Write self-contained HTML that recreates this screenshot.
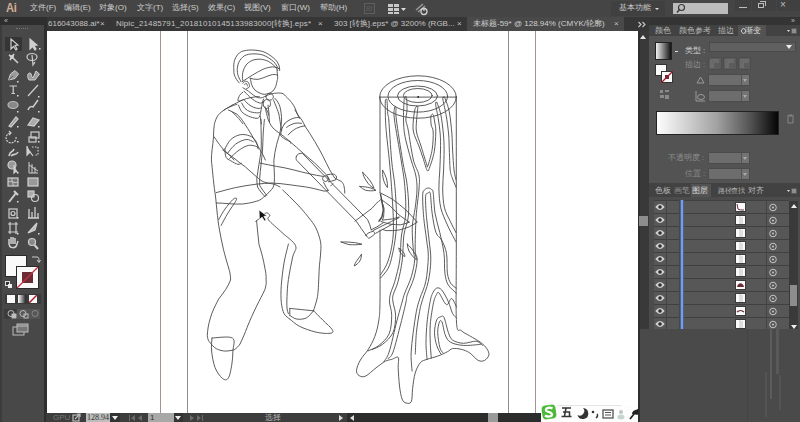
<!DOCTYPE html>
<html><head><meta charset="utf-8">
<style>
*{margin:0;padding:0;box-sizing:border-box}
html,body{width:800px;height:422px;overflow:hidden;background:#4a4a4a;font-family:"Liberation Sans",sans-serif}
.a{position:absolute}
.t{position:absolute;white-space:nowrap;color:#cfcfcf;font-size:8px;line-height:10px}
.p{font-size:7.5px}
</style></head><body>
<!-- menubar -->
<div class="a" style="left:0;top:0;width:800px;height:17px;background:#454545"></div>
<div class="t" style="left:6px;top:1px;font-size:13.5px;line-height:13px;color:#d4ae95;font-weight:bold;transform:scaleX(0.82);transform-origin:0 0;letter-spacing:-0.3px">Ai</div>
<div class="t" style="left:30px;top:3px">文件(F)</div>
<div class="t" style="left:64px;top:3px">编辑(E)</div>
<div class="t" style="left:99px;top:3px">对象(O)</div>
<div class="t" style="left:137px;top:3px">文字(T)</div>
<div class="t" style="left:172px;top:3px">选择(S)</div>
<div class="t" style="left:208px;top:3px">效果(C)</div>
<div class="t" style="left:244px;top:3px">视图(V)</div>
<div class="t" style="left:281px;top:3px">窗口(W)</div>
<div class="t" style="left:320px;top:3px">帮助(H)</div>
<div class="a" style="left:364px;top:3px;width:11px;height:11px;border:1px solid #5e5e5e"></div>
<div class="t" style="left:366px;top:4px;font-size:7px;color:#5e5e5e">Br</div>
<svg class="a" style="left:386px;top:2px" width="24" height="14">
 <rect x="2" y="2" width="5" height="3" fill="#c9c9c9"/><rect x="8" y="2" width="5" height="3" fill="#c9c9c9"/>
 <rect x="2" y="6" width="5" height="3" fill="#c9c9c9"/><rect x="8" y="6" width="5" height="3" fill="#c9c9c9"/>
 <rect x="2" y="10" width="5" height="2" fill="#c9c9c9"/><rect x="8" y="10" width="5" height="2" fill="#c9c9c9"/>
 <path d="M15 6 L20 6 L17.5 9Z" fill="#dcdcdc"/>
</svg>
<svg class="a" style="left:414px;top:2px" width="18" height="14">
 <path d="M2 8 L9 2 M4 10 L11 4" stroke="#9a9a9a" stroke-width="1.5"/>
 <circle cx="10" cy="9.5" r="3" fill="none" stroke="#d0d0d0" stroke-width="1.3"/>
 <path d="M10 5.5 V9" stroke="#d0d0d0" stroke-width="1.2"/>
</svg>
<div class="a" style="left:611px;top:1px;width:54px;height:15px;background:#404040"></div>
<div class="t" style="left:619px;top:3px">基本功能</div>
<div class="a" style="left:655px;top:8px;width:0;height:0;border-left:2px solid transparent;border-right:2px solid transparent;border-top:2px solid #ddd"></div>
<div class="a" style="left:673px;top:3px;width:55px;height:11px;background:#bcbcbc"></div>
<svg class="a" style="left:675px;top:3px" width="12" height="11"><circle cx="6.5" cy="4.5" r="3" fill="none" stroke="#3a3a3a" stroke-width="1.2"/><path d="M4.5 6.5 L2 9.5" stroke="#3a3a3a" stroke-width="1.4"/></svg>
<div class="a" style="left:735px;top:0;width:16px;height:11px;background:#404040"></div>
<div class="a" style="left:752px;top:0;width:24px;height:11px;background:#404040"></div>
<div class="a" style="left:777px;top:0;width:23px;height:11px;background:#404040"></div>
<div class="a" style="left:739px;top:7px;width:8px;height:1px;background:#bdbdbd"></div>
<div class="a" style="left:758px;top:3px;width:6px;height:5px;border:1px solid #bdbdbd"></div>
<div class="a" style="left:760px;top:1px;width:6px;height:5px;border-top:1px solid #bdbdbd;border-right:1px solid #bdbdbd"></div>
<div class="t" style="left:780px;top:0px;color:#bdbdbd;font-size:10px">×</div>

<!-- tab bar -->
<div class="a" style="left:46px;top:17px;width:602px;height:14px;background:#363636"></div>
<div class="a" style="left:467px;top:17px;width:157px;height:14px;background:#494949"></div>
<div class="t" style="left:48px;top:19px;color:#c4c4c4">616043088.ai*</div>
<div class="t" style="left:100px;top:19px;color:#c4c4c4">×</div>
<div class="t" style="left:116px;top:19px;color:#c4c4c4;letter-spacing:0.12px">Nipic_21485791_20181010145133983000[转换].eps*</div>
<div class="t" style="left:318px;top:19px;color:#c4c4c4">×</div>
<div class="t" style="left:334px;top:19px;color:#c4c4c4">303 [转换].eps* @ 3200% (RGB...</div>
<div class="t" style="left:457px;top:19px;color:#c4c4c4">×</div>
<div class="t" style="left:473px;top:19px;color:#d0d0d0">未标题-59* @ 128.94% (CMYK/轮廓)</div>
<div class="t" style="left:614px;top:19px;color:#c4c4c4">×</div>

<!-- left toolbar -->
<div class="a" style="left:0;top:17px;width:47px;height:405px;background:#2e2e2e"></div>
<div class="a" style="left:0;top:25px;width:44px;height:397px;background:#484848"></div>
<div class="a" style="left:0;top:25px;width:2px;height:397px;background:#3c3c3c"></div>
<div class="t" style="left:4px;top:17px;font-size:7px;line-height:8px;color:#bbb">«</div>
<div class="a" style="left:16px;top:28px;width:12px;height:2px;border-top:1px dotted #777"></div>
<div class="a" style="left:5px;top:37px;width:17px;height:14px;background:#353535"></div>
<svg class="a" style="left:0;top:25px" width="44" height="320" fill="none" stroke="#cfcfcf" stroke-width="1.2">
 <!-- selection -->
 <path d="M11 14 L11 24 L13.5 21.5 L16 25 L17 24 L15 20.5 L18 20 Z"/>
 <path d="M30 14 L30 24 L32.5 21.5 L35 25 L36 24 L34 20.5 L37 20 Z" fill="#cfcfcf"/>
 <rect x="39" y="23" width="1.5" height="1.5" fill="#ddd" stroke="none"/>
 <!-- wand / lasso -->
 <path d="M9 30 L12 32 M14 29 L12 32 L10 35 M12 32 L18 38" stroke-width="1.6"/>
 <circle cx="12" cy="32" r="2" fill="#cfcfcf" stroke="none"/>
 <ellipse cx="32" cy="32" rx="5" ry="3.5"/><path d="M32 30 L33 40 L35 37"/>
 <!-- pen -->
 <path d="M8.5 55 L10.5 49 L15 45.5 L18.5 49 L15 53.5 Z" fill="#9a9a9a" stroke-width="1"/><path d="M8.5 55 L13 51" stroke-width="0.8" stroke="#444"/><rect x="17" y="56" width="1.5" height="1.5" fill="#ddd" stroke="none"/>
 <path d="M29 55 C27 52 27 48 30 48 C32 48 31 52 33 53 L36 46 L39.5 49 L35 55 Z" fill="#9a9a9a" stroke-width="1"/>
 <!-- T / line -->
 <path d="M9.5 61 H17 M13.2 61 V68.5 M11.5 68.5 H15" stroke-width="1.2"/><rect x="17" y="70" width="1.5" height="1.5" fill="#ddd" stroke="none"/>
 <path d="M28 71 L38 60"/><rect x="38" y="71" width="1.5" height="1.5" fill="#ddd" stroke="none"/>
 <!-- ellipse / brush -->
 <ellipse cx="13" cy="80" rx="5" ry="3.5" fill="#888" stroke="#bbb"/><rect x="17" y="86" width="1.5" height="1.5" fill="#ddd" stroke="none"/>
 <path d="M28 85 C30 80 33 82 33 82 L38 75" stroke-width="1.5"/><rect x="38" y="86" width="1.5" height="1.5" fill="#ddd" stroke="none"/>
 <!-- pencil / eraser -->
 <path d="M9 101 L16 92 L18 94 L11 102 Z" fill="#999"/><rect x="17" y="101" width="1.5" height="1.5" fill="#ddd" stroke="none"/>
 <path d="M28 100 L33 93 L39 95 L34 101 Z" fill="#aaa"/><rect x="38" y="101" width="1.5" height="1.5" fill="#ddd" stroke="none"/>
 <!-- rotate / scale -->
 <path d="M16 112 A5 5 0 1 1 10 108" stroke-dasharray="2 1"/><path d="M9 106 L11 108 L9 110"/><rect x="17" y="116" width="1.5" height="1.5" fill="#ddd" stroke="none"/>
 <rect x="29" y="112" width="7" height="5"/><rect x="31" y="107" width="8" height="6"/><rect x="38" y="116" width="1.5" height="1.5" fill="#ddd" stroke="none"/>
 <!-- warp / free transform -->
 <path d="M9 131 C10 125 13 128 14 124 M11 131 C14 128 16 131 18 127" stroke-width="1.6"/>
 <path d="M27 121 L27 130 L30 127 L33 131" fill="#ccc"/><path d="M32 122 H38 V130 H34" stroke-dasharray="1.5 1.5"/>
 <!-- shape builder / perspective -->
 <circle cx="12" cy="140" r="4" fill="#999"/><path d="M14 140 L14 148 L16 146 L18 148" fill="#ccc"/><rect x="17" y="147" width="1.5" height="1.5" fill="#ddd" stroke="none"/>
 <path d="M29 137 V148 H38 M32 139 V148 M35 142 V148 M29 140 L38 146" stroke-width="1"/>
 <!-- mesh / gradient -->
 <rect x="8" y="153" width="10" height="8" fill="#777"/><path d="M8 157 C11 155 14 159 18 157 M12 153 C11 156 14 158 13 161" stroke-width="0.9"/>
 <rect x="28" y="153" width="10" height="8" fill="#999"/>
 <!-- eyedropper / blend -->
 <path d="M9 177 L16 168 M14 166 L18 170" stroke-width="2"/><rect x="17" y="176" width="1.5" height="1.5" fill="#ddd" stroke="none"/>
 <rect x="28" y="166" width="6" height="6" fill="#aaa"/><circle cx="35" cy="173" r="3.5"/>
 <!-- symbol sprayer / graph -->
 <rect x="9" y="184" width="8" height="9"/><circle cx="13" cy="188.5" r="2"/><rect x="17" y="192" width="1.5" height="1.5" fill="#ddd" stroke="none"/>
 <path d="M28 193 H39 M29 193 V184 M32 193 V187 M35 193 V182 M38 193 V188" stroke-width="1.3"/>
 <!-- artboard / slice -->
 <path d="M8 199 H18 M8 207 H18 M10 197 V209 M16 197 V209" stroke-width="1.2"/><rect x="17" y="208" width="1.5" height="1.5" fill="#ddd" stroke="none"/>
 <path d="M28 208 L37 198 L35 205 Z" fill="#bbb"/><rect x="38" y="208" width="1.5" height="1.5" fill="#ddd" stroke="none"/>
 <!-- hand / zoom -->
 <path d="M9 219 L9 214 M11 219 V212 M13 219 V212 M15 219 V213 M9 218 C9 224 16 224 17 219 L18 216" stroke-width="1.5"/>
 <circle cx="32" cy="217" r="3.5" fill="#888"/><path d="M34.5 220 L38 224" stroke-width="2"/>
</svg>
<!-- fill / stroke -->
<div class="a" style="left:5px;top:255px;width:22px;height:22px;background:#fafafa;border:1px solid #2a2a2a"></div>
<div class="a" style="left:16px;top:266px;width:23px;height:23px;background:#fafafa;border:1px solid #2a2a2a"></div>
<div class="a" style="left:22px;top:272px;width:11px;height:11px;background:#6b2b34"></div>
<svg class="a" style="left:16px;top:266px" width="23" height="23"><path d="M1 22 L22 1" stroke="#c0303f" stroke-width="1.2"/></svg>
<svg class="a" style="left:31px;top:254px" width="10" height="10" fill="none" stroke="#ccc" stroke-width="1"><path d="M1 3 H6 C8 3 8 5 8 8 M6 6 L8 8.5 L9.5 6"/></svg>
<div class="a" style="left:5px;top:281px;width:5px;height:5px;border:1px solid #ddd;background:#333"></div>
<div class="a" style="left:8px;top:284px;width:4px;height:4px;background:#eee"></div>
<div class="a" style="left:5px;top:294px;width:36px;height:10px;background:#3a3a3a"></div>
<div class="a" style="left:7px;top:295px;width:8px;height:8px;background:#fafafa"></div>
<div class="a" style="left:18px;top:295px;width:8px;height:8px;background:linear-gradient(90deg,#fff,#222)"></div>
<div class="a" style="left:29px;top:295px;width:8px;height:8px;background:#fafafa"></div>
<svg class="a" style="left:29px;top:295px" width="8" height="8"><path d="M0 8 L8 0" stroke="#b01e30" stroke-width="1.5"/></svg>
<div class="a" style="left:4px;top:309px;width:36px;height:10px;background:#3c3c3c"></div>
<div class="a" style="left:17px;top:309px;width:23px;height:10px;background:#555"></div>
<svg class="a" style="left:4px;top:309px" width="36" height="10" fill="none" stroke="#bdbdbd" stroke-width="1">
 <circle cx="7" cy="4.5" r="3"/><rect x="8" y="5" width="4" height="4" fill="#bdbdbd"/>
 <circle cx="19" cy="4.5" r="3"/><rect x="20" y="5" width="4" height="4"/>
 <circle cx="31" cy="4.5" r="3" stroke="#888"/>
</svg>
<svg class="a" style="left:12px;top:323px" width="18" height="13" fill="none" stroke="#bdbdbd" stroke-width="1">
 <rect x="1" y="4" width="11" height="8" fill="#494949"/><rect x="5" y="1" width="11" height="8" fill="#777"/><path d="M5 3 H16"/>
</svg>

<!-- canvas -->
<div class="a" style="left:47px;top:31px;width:591px;height:382px;background:#fff"></div>
<div class="a" style="left:160px;top:31px;width:1px;height:382px;background:#a3928e"></div>
<div class="a" style="left:187px;top:31px;width:1px;height:382px;background:#8e8e8e"></div>
<div class="a" style="left:508px;top:31px;width:1px;height:382px;background:#8e8e8e"></div>
<div class="a" style="left:535px;top:31px;width:1px;height:382px;background:#a3928e"></div>

<svg class="a" style="left:0;top:0" width="800" height="422" fill="none" stroke="#4a4a4a" stroke-width="0.9" stroke-linecap="round" stroke-linejoin="round">

<!-- hat -->
<path d="M239.2,82.9 C235,78 233.5,74 233.9,71.1 C233.5,66 233.8,63 234.5,60.4 C236,56 238.5,53 241.6,51.5 C245,50.3 248,50 251.1,50 C255,50 259,50.5 262.9,51.5 C267,53 270.5,55.5 273.6,58 C276,60 277.8,62.5 278.9,65.1 C279.5,67 279.8,69 279.7,70.5"/>
<path d="M241,81.7 C239,78 237.5,75 237.4,72.3 C237,68.5 237.5,65.5 238.6,62.8 C240,59.5 242,57.5 244.5,55.7 C247,54.5 249.5,54 252.3,53.9 C256,53.8 259.5,54 262.9,55 C267,56.5 270.5,59 273.6,61.6 C275.5,63.5 277,66 278.3,68.7"/>
<path d="M242.8,80.5 C242.3,77.5 242.3,75 242.8,72.3 C243.5,69 245,66.5 246.9,64 C249,62 251.5,60.5 254,59.8 C256,59.3 258.3,59.1 260.5,59.2 C263.5,59.5 266.3,60.3 268.8,61.6 C271,62.8 273,64.5 274.8,66.3 C276,67.6 277,69 277.7,70.5"/>
<path d="M242.2,81.7 C245.5,79.5 249,77.2 252.3,75.2 C256,73 259.5,71 262.9,69.3 C266,68 269,67.2 272.4,66.9 C275,66.8 277.2,67.6 278.9,68.7"/>
<path d="M249.9,78.2 C252,78.8 254.5,79.4 257,79.4 C260,79.2 262.5,78 265.3,77 C268,76 270,75 272.4,74.6 C274.5,74.3 276.3,74.6 277.7,75.2"/>

<path d="M277.0,69.9 C277.1,71.3 277.7,76.5 277.7,78.2 C277.7,79.9 277.5,78.8 277.2,80.2 C276.9,81.6 276.3,84.9 275.6,86.7 C274.9,88.5 273.9,90.0 272.8,91.1 C271.7,92.2 270.4,92.8 269.0,93.3 C267.6,93.8 266.1,94.3 264.7,94.3 C263.2,94.3 261.9,94.0 260.3,93.3 C258.7,92.6 256.4,91.5 254.9,90.0 C253.4,88.5 252.3,86.4 251.6,84.5 C250.9,82.6 250.7,79.5 250.5,78.5"/>
<path d="M242.9,83.4 C243.3,83.1 244.2,81.5 245.1,81.3 C246.0,81.1 247.6,81.5 248.3,82.4 C249.0,83.3 249.8,85.6 249.4,86.7 C249.1,87.8 246.7,88.5 246.2,88.9"/>
<path d="M244.5,84.5 C244.8,84.3 246.0,83.2 246.5,83.5 C247.0,83.8 247.3,85.6 247.5,86.0"/>
<path d="M242.9,87.8 C243.8,88.3 246.5,89.8 248.3,91.1 C250.1,92.4 252.2,94.3 253.8,95.4 C255.4,96.5 256.7,97.2 258.1,97.6 C259.6,98.0 261.0,98.0 262.5,97.6 C264.0,97.2 265.6,96.0 266.9,95.4 C268.2,94.9 268.8,94.7 270.1,94.3 C271.4,93.9 272.5,93.5 274.5,93.3 C276.5,93.1 280.2,92.8 282.0,93.3 C283.8,93.8 283.9,94.5 285.5,96.0 C287.1,97.5 290.0,100.5 291.6,102.5 C293.2,104.5 294.0,106.0 295.0,108.0 C296.0,110.0 296.7,112.7 297.5,114.4 C298.3,116.1 299.4,117.7 299.8,118.3"/>
<path d="M265.8,96.5 C265.9,95.5 267.5,94.0 268.5,93.6 C269.5,93.2 271.0,93.4 271.8,94.0 C272.6,94.6 273.4,96.0 273.4,97.0 C273.3,98.0 272.4,99.3 271.5,99.8 C270.6,100.3 268.9,100.3 268.0,99.8 C267.1,99.2 265.7,97.5 265.8,96.5Z"/>
<path d="M264.0,101.0 C264.6,99.9 266.0,99.5 267.0,99.6 C268.0,99.7 269.6,100.4 270.1,101.5 C270.6,102.6 270.6,104.8 270.0,106.0 C269.4,107.2 267.6,108.5 266.5,108.5 C265.4,108.5 264.0,107.2 263.6,106.0 C263.2,104.8 263.4,102.1 264.0,101.0Z"/>
<path d="M266.0,108.5 C266.3,109.1 267.4,110.9 267.8,112.0 C268.2,113.1 268.4,114.5 268.5,115.0"/>
<path d="M242.9,92.2 C242.3,92.7 240.4,94.0 239.6,95.4 C238.8,96.9 237.4,100.2 238.0,100.9 C238.6,101.6 242.1,100.0 242.9,99.8"/>
<path d="M244.0,91.1 C244.9,92.0 247.6,94.9 249.4,96.5 C251.2,98.1 253.1,99.8 254.9,100.9 C256.7,102.0 258.9,102.9 260.3,103.1 C261.8,103.3 263.1,102.2 263.6,102.0"/>
<path d="M244.0,99.8 C244.7,100.5 246.7,102.8 248.3,104.1 C249.9,105.4 252.0,106.7 253.8,107.4 C255.6,108.1 257.9,108.5 259.2,108.5 C260.5,108.5 261.0,107.6 261.4,107.4"/>
<path d="M241.8,103.1 C242.4,104.0 243.7,107.0 245.1,108.5 C246.5,110.0 248.3,111.1 250.5,111.8 C252.7,112.5 256.5,112.9 258.1,112.9 C259.7,112.9 259.9,112.0 260.3,111.8"/>
<path d="M238.5,105.2 C239.1,106.3 240.2,110.0 241.8,111.8 C243.4,113.6 245.9,115.0 248.3,116.1 C250.7,117.2 254.2,118.1 256.0,118.3 C257.8,118.5 258.5,117.9 259.2,117.2 C259.9,116.5 259.9,115.5 260.3,114.0 C260.7,112.5 261.1,110.0 261.5,108.0 C261.9,106.0 262.1,103.5 262.5,102.0 C262.9,100.5 263.4,99.5 263.6,99.0"/>
<path d="M232.0,105.2 C233.1,104.7 236.1,103.1 238.5,102.0 C240.9,100.9 243.6,99.5 246.2,98.7 C248.8,97.9 251.6,97.5 253.8,97.1 C256.0,96.7 258.3,96.6 259.2,96.5"/>
<path d="M224.1,110.0 C225.4,109.2 230.7,106.0 232.0,105.2"/>
<path d="M232.0,111.8 C233.1,112.9 236.7,116.3 238.5,118.3 C240.3,120.3 242.2,122.9 242.9,123.8"/>
<path d="M273.4,99.8 C273.8,100.7 274.7,102.8 275.6,105.2 C276.5,107.6 278.0,110.9 278.8,114.0 C279.6,117.1 280.0,121.3 280.5,124.0 C281.0,126.7 281.4,129.0 281.6,130.0"/>
<path d="M268.0,105.2 C268.2,106.7 268.8,111.2 269.0,114.0 C269.2,116.8 269.4,120.7 269.5,122.0"/>
<path d="M260.3,116.1 C260.5,117.4 261.2,122.7 261.4,124.0"/><!-- torso left -->
<path d="M236.9,104.3 C232,106 227.5,107.5 224.1,110 C220.5,112.5 218.3,114.5 217,117 C215.5,120 214.6,122.5 214.2,125.6 C213.8,129 213.5,133 213.5,136.9 C213.2,141 212.6,145.5 212.1,149.7 C211.7,153 211.5,156.5 211.4,160 C211.8,165 212.5,170 212.8,174.2 C213.5,181 214.2,188 214.9,192 C215.5,196 216,200 216.3,204.2 C217,212 217.8,219 218.7,225.5 C220,233 221.5,241 223.4,249.2 C225,256 227.5,264 229.4,270.6 C230.2,274 230.8,277 230.5,280 C228,287 224,292 218.7,299 C215,306 212,312 210.4,317.9 C208.5,324 207.5,330 207.3,335.7 C207.5,338 208,340 209.2,341.6 C211.5,344.5 213.5,347 216.3,348.7 C219.5,350.3 222.5,351 225.8,351.1 C228.5,351 231.5,350.5 234.1,349.9 C236.5,348 238.5,346.5 240,344 C242.5,339 245,333 247.1,327.4 C250,320 253.5,312.5 256.6,306.1 C259.5,300 262.8,294.5 264.9,289.5 C266,286 266.5,283 266.1,280 C266.2,275 265.8,272 264.9,268.2 C263.5,260 261.5,252 259,244.5 C258,236 257.3,228 256.6,220.8"/>
<path d="M228.4,110 C231,111.2 234,112.5 236.9,114.2 C239.5,116.5 242,119.5 244,122.7 C246.5,126.5 249,130.5 251.1,134 C253,137.5 255,141 256.8,144 C258.8,147.5 260.5,151 262.5,154 C263.5,156 264.5,158 265.3,160"/>
<path d="M214.2,136.9 C216.5,140.5 219,144 221.3,146.9 C223.5,149.5 226,152 228.4,154 C230.5,156 232.3,158 234,160 M211.4,160"/>
<!-- sleeve stripes left -->
<path d="M224.9,148.9 C225.9,147.3 228.2,141.9 230.8,139.5 C233.4,137.1 237.2,135.3 240.3,134.7 C243.5,134.1 247.1,134.9 249.7,135.9 C252.3,136.9 254.3,138.7 255.7,140.7 C257.1,142.7 257.6,146.6 258.0,147.8"/>
<path d="M227.2,153.7 C228.6,152.1 232.3,146.6 235.5,144.2 C238.7,141.8 243.2,139.9 246.2,139.5 C249.2,139.1 252.1,141.4 253.3,141.8"/>
<path d="M229.6,158.4 C231.2,157.0 235.9,152.3 239.1,150.1 C242.2,147.9 245.6,146.0 248.5,145.4 C251.4,144.8 255.2,146.0 256.8,146.6 C258.4,147.2 257.8,148.6 258.0,149.0"/>
<path d="M224.9,148.9 C225.1,150.3 225.0,155.2 226.0,157.2 C227.0,159.2 228.8,159.6 230.8,160.8 C232.8,162.0 236.1,163.9 237.9,164.3 C239.7,164.7 240.8,163.4 241.4,163.2"/>
<!-- arm seam to belt -->
<path d="M222.7,150 C226,152.5 229.5,155 232.7,157.1 C237,160.5 241,164 245.5,167 C249.5,170.5 253,174 256.8,177 C259,179 261.5,181 263.9,182 C267,183 270.5,183.6 273.9,184.1 C276,184.8 278,185.8 280,187"/>
<!-- placket double -->
<path d="M260.8,119.1 C261,123 261,127 261.1,130 C261.2,136 261.5,144 261.1,150 C260.5,155 259.7,160 259,164.2 C258.2,169 257.5,174 256.8,178.4 C256.8,181.5 257,184.5 257.5,187 C259.5,190.5 262.5,194 265.3,196.9"/>
<path d="M264.4,119.5 C264,124 263.5,129 263.2,133 C263,139 262.8,145 262.5,150 C262,155 261.5,160 261.1,164.2 C260.5,169 260,174 259.7,178.4 C259.6,181 259.6,183.5 259.7,185.5 C261.8,189 264.3,192.5 266.8,195.5"/>
<!-- right torso contour -->
<path d="M274.9,98.3 C277.5,101 279,104 279.9,106.6 C281,111 281.6,115.5 281.6,119.9 C281.3,124.5 280.8,129 279.9,133.1 C278.8,137.5 277.5,141 276.6,144.7 C275.3,150 274.4,155 273.9,160 C273.7,164.5 274.2,168 274.3,172 C274.5,176 274.5,179.5 274.3,182.6 C274,186 272.8,189 270,191.1 C268,193.5 266,195.5 263.7,197.1 C261,199.5 258.5,201 256.8,201.1 C252,202.7 247,203.5 242.6,204 C238,204.2 233,204.1 228.4,203.7 C224.5,203.3 220.5,203 216.3,203"/>
<!-- inner neck to sleeve -->
<path d="M265,106.6 C266,111 267,116 268.3,119.9 C270,124 272,127.5 274.9,129.8 C277,131.5 279.3,133 281.6,134.8 C284,136.5 287,139 289.9,141.5 C290.3,142 290.6,142.6 290.7,143.2"/>
<!-- right shoulder to sleeve -->
<path d="M294.9,110 C296.5,112.5 298.5,115.5 299.8,118.3"/>
<!-- sleeve cuff right -->
<path d="M284.9,123.3 C287.5,121 290.5,119.3 293.2,118.3 C295.5,117.7 297.8,117.2 299.8,117.5 C301,118.2 301.8,119.3 302.3,120.8 C303.3,122.5 304.2,124.2 304.8,125.8"/>
<path d="M286.6,127.4 C289.3,125.3 292,124 294.9,123.3 C297,122.9 299.3,122.9 301.5,123.3"/>
<path d="M288.2,134.9 C290.8,132 293.5,129.8 296.5,128.3 C299.3,127 302,126.2 304.8,125.8"/>
<path d="M284.9,123.3 C283.3,125.5 282.3,127.7 281.6,129.9 C281,131.8 280.7,133.8 280.7,135.7 C282,137 283.5,138.2 284.9,139 C286.6,140 288.3,140.8 289.9,141.5"/>
<!-- forearm (upper arm) -->
<path d="M304.8,125.8 C308,130.5 311.5,136 314.8,141.5 C317.8,146.5 320.5,151.5 323.1,156.5 C325.3,161 327.5,165.5 329.7,169.8 C331.3,172.5 333,175.5 334.7,178 C337,179.5 339.5,180.5 341.5,181.5 C342.8,183 343.6,184.3 343.9,185.7 C344.5,188 344.8,190.5 344.8,193.1"/>
<path d="M289.9,141.5 C294.5,145.5 299,149.5 303.2,153.2 C307,156.5 311,160 314.8,163.1 C318.8,167 322.5,171 326.4,174.7 C327.5,176.3 328.6,178 329.7,180"/>
<!-- long curves across -->
<path d="M260,163.1 C265.5,164.3 271,165.3 276.6,166.4 C282,167.3 287.8,168.3 293.2,169.8 C298.8,171.2 304.3,172.7 309.8,173.9 C314.3,174.9 318.8,175.8 323.1,176.4"/>
<path d="M216.3,192.6 C223,190.8 229,189 235.5,187.6 C242.5,186.2 249.5,185 256.8,184.1 C262,183.6 267,183.2 272,183 C278,183.2 284,184 290,184.8 C295,185.5 300.5,186.3 305.5,186.9 C311.5,187.8 317.8,189.5 324,191.1 C325.5,191.3 327,191 328.2,190.4"/>
<!-- cuff & hand right -->
<circle cx="325.5" cy="178.6" r="2.9"/>
<path d="M327.2,174.7 C329.5,174.2 332,174 334.3,174.1 C335.3,175 336.2,176 336.7,177 C336.4,178 336,179 335.5,180 C333,180.8 330.7,181.3 328.4,181.8"/>
<path d="M323.6,182.4 C324.5,184 325.2,185.5 326,187.1 C326.8,188.3 327.6,189.5 328.4,190.7 M330.7,185.9 C331.5,185 332.3,184.2 333.1,183.5"/>
<!-- axe handle -->
<path d="M296.4,156.3 C297,154.2 299,153.2 302.3,153.3 L367.7,219.8 C369.3,223 370.5,226.5 371.2,229.8"/>
<path d="M296.4,156.3 C295.8,158 296,159.3 296.8,160.5 L356.3,221.2 C359.5,226 362.8,230.8 366.2,235.5"/>
<path d="M354.9,221.2 C357.8,219 360.5,217 363.4,214.8 C366.3,212.7 369,210.5 371.9,208.4 C373.5,206.8 374.8,205 376.2,203.5 C377.6,202.2 379,201 380.5,199.9"/>
<path d="M371.2,229.8 C373,228.7 375,227.8 376.9,226.9 C379,225.5 381.3,224 383.3,222.7"/>
<path d="M366.2,235.5 C366.7,234.7 367.2,234 367.7,233.3 C369.5,232.5 371.5,231.7 373.3,231.2 C374.2,232 374.8,233 374.8,234 C373,235.7 371,237 369.1,238.3 C368,238 367,236.8 366.2,235.5Z"/>
<!-- axe blade -->
<path d="M380.2,192.8 C384.5,195 388.5,197 392.6,199.3 C397,202.5 401.3,206 405.7,209.8 C409.7,213.8 413.5,218 417.4,222.2 C414.8,223.8 412.3,225.3 409.6,226.7 C406,228 402.5,229.2 399.1,230 C394.8,230.6 390.5,230.8 386.1,230.6 C384.7,230.3 383.4,229.8 382.2,229.3"/>
<path d="M380.9,199.3 C384,201.5 387,203.6 390,205.9 C393,208.9 396,212 399.1,215 C402.5,217.5 406,220 409.6,222.2 C406.5,223.3 403.5,224.2 400.4,224.8 C397,224.8 393.5,224.5 390,224.1 C387,223.3 384,222.4 380.9,221.5"/>
<path d="M381.5,200.7 C382.5,203.3 383.5,206 384.1,208.5 C384,211.5 383.8,214.7 383.5,217.6 C383.1,218.5 382.7,219.4 382.2,220.2 C385.5,219.8 389,219.3 392.6,218.9 C394.8,218.3 397,217.6 399.1,217"/>
<path d="M380.5,194.2 C381,196.5 381.5,199 381.9,201.3 C382.4,204 382.9,207 383.3,209.9 C382.9,212.3 382.4,214.7 381.9,217 C381,218.4 380,219.8 379,221.2" stroke-width="1.4"/>
<path d="M373,230.6 C379,227.5 385,224.5 391.3,221.5 C394,220.2 396.5,218.9 399.1,217.6 M375.7,233.3 C381,230.3 386.7,227.2 392.6,224.1"/>
<!-- chips -->
<path d="M362.7,172.3 C365.5,175 368,178 370.3,181 C372,183.5 373.3,186 374.1,188.4 C371,186.8 368.5,184.5 366.5,181 C364.5,178.5 363.2,175.5 362.7,172.3Z"/>
<path d="M359.9,186.5 C363.5,186.5 367,187 370.5,188 C372.5,188.6 374.3,189.3 376,190.3 C372.5,191 369,191 365.5,190.2 C363.3,189.3 361.3,188 359.9,186.5Z"/>
<path d="M382.7,170.4 C384.3,173 385.7,176 386.6,179 C387.3,181.8 387.6,184.7 387.4,187.5 C385.5,185.2 384,182.3 383.3,179 C382.6,176.2 382.4,173.3 382.7,170.4Z"/>
<path d="M341.1,242 C345.5,241.8 350,242 354.5,242.6 C357,243 359.5,243.5 361.9,244.2 C358,244.8 353.5,245 349,244.6 C346.2,243.9 343.5,243 341.1,242Z"/>
<path d="M361.4,254.5 C360,256.5 358,258.8 356.3,261.5 C355.3,263 354.6,264.5 354.2,266 C356.5,264.8 358.5,263 359.8,261 C361,259 361.5,256.8 361.4,254.5Z"/>
<path d="M399,248.3 C401.5,249.8 403.5,251.8 404.5,254.2 C404.9,255.3 404.9,256.2 404.8,256.6 C402.3,255.3 400.3,253.2 399.4,250.7 C399.1,249.9 399,249 399,248.3Z"/>
<path d="M407.3,244.1 C410.5,247 413.3,250.5 415.3,254.3 C416,256.2 416.4,258.2 416.4,259.9 C413.5,257.5 411,254.5 409,251 C408,248.8 407.4,246.5 407.3,244.1Z"/>
<ellipse cx="418" cy="97" rx="38.3" ry="21.2"/>
<ellipse cx="417.8" cy="96.3" rx="29.8" ry="15.8"/>
<ellipse cx="417.5" cy="96" rx="20" ry="10"/>
<ellipse cx="417.8" cy="95.5" rx="14.4" ry="7"/>
<path d="M379.7,97.1 H456.3"/>
<circle cx="418.2" cy="96.9" r="0.9" fill="#111" stroke="none"/>
<path d="M380.0,97.0 C380.0,113.0 380.0,177.0 380.0,193.0"/>
<path d="M380.0,230.0 C380.0,241.7 380.2,284.9 380.0,300.0 C379.8,315.1 379.6,314.8 378.7,320.9 C377.8,327.0 376.6,331.7 374.8,336.5 C373.1,341.3 370.6,345.6 368.2,349.5 C365.8,353.4 362.3,356.5 360.4,360.0 C358.4,363.5 356.7,367.8 356.5,370.4 C356.3,373.0 357.6,374.7 359.1,375.6 C360.6,376.6 362.8,377.4 365.6,376.1 C368.4,374.8 372.8,370.3 376.1,367.8 C379.4,365.3 382.6,362.7 385.2,361.3 C387.8,359.9 389.5,360.0 391.7,359.4 C393.9,358.8 397.1,356.0 398.2,357.4 C399.3,358.8 398.0,363.0 398.2,367.8 C398.4,372.6 398.9,380.8 399.5,386.0 C400.1,391.2 401.0,396.3 402.1,399.1 C403.2,401.9 404.5,402.6 406.0,403.0 C407.5,403.4 410.2,404.1 411.3,401.7 C412.4,399.3 412.0,393.4 412.6,388.6 C413.2,383.8 413.9,377.3 415.2,373.0 C416.5,368.7 418.4,364.9 420.4,362.6 C422.4,360.3 424.2,360.4 427.1,359.3 C430.0,358.2 434.3,357.4 437.7,356.1 C441.1,354.9 444.8,353.1 447.3,351.8 C449.8,350.6 450.3,349.0 452.6,348.6 C454.9,348.2 458.4,348.6 461.2,349.3 C464.0,350.0 466.9,351.0 469.7,352.9 C472.5,354.8 475.7,359.1 478.2,360.4 C480.7,361.6 482.8,361.3 484.6,360.4 C486.4,359.5 488.5,357.0 488.9,355.0 C489.3,353.0 488.2,350.7 486.8,348.6 C485.4,346.5 483.2,344.3 480.4,342.2 C477.5,340.1 472.9,337.8 469.7,335.8 C466.5,333.9 463.4,332.8 461.2,330.5 C459.0,328.2 457.3,335.4 456.5,322.0 C455.7,308.6 456.3,287.5 456.3,250.0 C456.3,212.5 456.3,122.5 456.3,97.0"/>
<path d="M380.5,274.8 C381.5,273.1 384.8,268.8 386.5,264.9 C388.2,261.0 389.6,256.6 390.7,251.6 C391.8,246.6 392.8,241.1 393.2,235.0 C393.6,228.9 393.5,223.1 393.2,215.0 C392.9,206.9 392.1,195.6 391.5,186.4 C390.9,177.2 390.1,168.7 389.3,160.0 C388.5,151.3 387.1,140.7 386.5,134.0 C385.9,127.3 385.7,125.3 385.5,120.0 C385.3,114.7 385.2,105.4 385.3,102.0 C385.4,98.6 385.6,99.8 385.9,99.6 C386.2,99.3 386.7,98.0 387.0,100.5 C387.3,103.0 387.5,111.3 387.8,114.6 C388.1,117.8 388.2,112.4 388.8,120.0 C389.4,127.6 390.6,148.9 391.6,160.0 C392.6,171.1 394.1,177.2 394.9,186.4 C395.7,195.6 396.4,206.9 396.5,215.0 C396.6,223.1 396.4,228.3 395.7,235.0 C395.0,241.7 393.6,249.4 392.3,254.9 C391.1,260.4 390.2,264.3 388.2,268.2 C386.2,272.1 381.8,276.5 380.5,278.1"/>
<path d="M368.2,350.8 C369.9,349.9 375.2,348.4 378.7,345.6 C382.2,342.8 386.9,338.9 389.1,333.9 C391.3,328.9 391.6,320.9 391.7,315.6 C391.8,310.3 389.7,305.8 389.5,302.0 C389.3,298.2 389.8,296.4 390.7,293.0 C391.6,289.6 393.3,286.9 394.8,281.4 C396.3,275.9 398.7,267.6 399.8,259.9 C400.9,252.2 400.5,242.5 401.5,235.0 C402.5,227.5 405.1,223.1 405.6,215.0 C406.2,206.9 405.6,195.6 404.8,186.4 C404.1,177.2 402.8,171.1 401.1,160.0 C399.4,148.9 395.6,128.4 394.5,120.0 C393.4,111.5 394.2,111.5 394.3,109.3 C394.4,107.1 394.7,106.9 395.0,106.7 C395.3,106.5 395.8,105.8 396.0,108.0 C396.2,110.2 395.3,111.3 396.4,120.0 C397.5,128.7 400.7,148.9 402.5,160.0 C404.3,171.1 406.3,177.2 407.3,186.4 C408.3,195.6 409.1,206.9 408.5,215.0 C407.9,223.1 404.9,227.5 403.9,235.0 C402.9,242.5 403.3,252.2 402.3,259.9 C401.3,267.6 399.6,275.6 398.1,281.4 C396.6,287.2 394.1,291.3 393.2,294.7 C392.3,298.1 392.6,298.5 393.0,302.0 C393.4,305.5 395.6,310.5 395.6,315.6 C395.6,320.7 395.2,327.8 393.0,332.6 C390.8,337.4 386.1,341.5 382.6,344.3 C379.1,347.1 373.9,348.6 372.2,349.5"/>
<path d="M383.9,361.3 C384.8,359.8 386.9,358.8 389.1,352.1 C391.3,345.4 394.7,329.2 396.9,320.9 C399.1,312.5 400.8,306.6 402.1,302.0 C403.4,297.4 403.2,297.2 404.8,293.0 C406.4,288.8 409.8,282.0 411.4,276.5 C413.0,271.0 414.4,264.3 414.7,259.9 C415.0,255.5 413.7,255.5 413.3,250.0 C412.9,244.5 412.0,233.9 412.3,226.9 C412.6,219.9 414.4,214.2 415.2,207.9 C416.0,201.6 416.9,194.5 417.0,189.0 C417.1,183.5 416.7,179.8 415.7,175.0 C414.7,170.2 412.9,166.4 411.1,160.0 C409.3,153.6 406.3,143.1 405.0,136.4 C403.7,129.7 403.7,125.7 403.5,120.0 C403.3,114.3 403.8,105.7 404.0,102.0 C404.2,98.3 404.3,98.4 404.7,97.6 C405.1,96.8 406.1,95.3 406.5,97.4 C406.9,99.5 407.1,106.2 407.0,110.0 C406.9,113.8 405.7,116.7 405.9,120.0 C406.1,123.3 406.9,123.3 408.2,130.0 C409.4,136.7 411.6,152.5 413.4,160.0 C415.2,167.5 418.0,170.2 418.9,175.0 C419.8,179.8 419.5,181.9 419.0,189.0 C418.5,196.1 416.7,207.2 416.1,217.4 C415.5,227.6 415.0,242.9 415.2,250.0 C415.4,257.1 417.4,255.2 417.2,259.9 C417.0,264.6 415.5,272.3 413.9,278.1 C412.2,283.9 408.6,290.7 407.3,294.7 C406.0,298.7 407.1,297.2 406.0,302.0 C404.9,306.8 403.0,315.1 400.8,323.5 C398.6,331.9 395.2,346.2 393.0,352.1 C390.8,358.0 388.7,357.6 387.8,358.7"/>
<path d="M416.5,106.5 C416.0,106.9 415.3,107.6 414.8,110.0 C414.3,112.4 413.5,117.3 413.3,121.0 C413.1,124.7 412.6,127.8 413.5,132.0 C414.4,136.2 417.3,141.7 418.9,146.0 C420.5,150.3 421.6,153.9 423.0,158.0 C424.4,162.1 426.1,169.0 427.2,170.5 C428.3,172.0 428.6,170.2 429.8,167.0 C431.0,163.8 433.3,157.1 434.3,151.3 C435.3,145.5 435.7,136.9 435.8,132.0 C435.9,127.1 435.1,124.8 434.7,122.0 C434.3,119.2 433.8,116.5 433.4,115.2 C432.9,113.9 432.4,114.0 432.0,114.3 C431.6,114.6 430.9,115.2 430.8,117.0 C430.7,118.8 430.8,122.5 431.2,125.0 C431.6,127.5 433.0,128.0 433.2,132.0 C433.4,136.0 433.0,143.8 432.2,149.2 C431.4,154.5 429.3,161.2 428.5,164.1 C427.7,166.9 427.7,166.1 427.4,166.3 C427.1,166.5 428.0,168.6 426.9,165.2 C425.8,161.8 422.7,151.5 421.0,146.0 C419.3,140.5 417.2,136.2 416.5,132.0 C415.8,127.8 416.3,125.1 416.5,121.0 C416.7,116.9 417.8,109.8 417.8,107.4 C417.8,105.0 417.0,106.1 416.5,106.5Z"/>
<path d="M456.0,242.0 C455.7,241.4 455.4,241.0 454.0,238.2 C452.6,235.4 449.6,230.1 447.4,225.0 C445.2,219.9 442.2,213.9 440.8,207.9 C439.4,201.9 439.1,195.3 438.9,189.0 C438.7,182.7 439.5,176.5 439.8,170.0 C440.1,163.5 440.4,156.0 440.5,150.0 C440.6,144.0 440.6,139.3 440.2,134.0 C439.8,128.7 439.0,123.4 438.2,118.4 C437.4,113.4 435.9,106.7 435.6,104.1 C435.3,101.5 436.1,103.0 436.3,102.8 C436.5,102.6 436.2,100.8 437.0,102.8 C437.8,104.8 439.7,109.3 440.8,114.5 C441.9,119.7 442.8,128.1 443.4,134.0 C443.9,139.9 444.1,144.0 444.1,150.0 C444.1,156.0 443.8,163.5 443.6,170.0 C443.4,176.5 442.6,182.7 442.7,189.0 C442.8,195.3 443.2,202.5 444.5,207.9 C445.8,213.3 448.3,217.1 450.2,221.2 C452.1,225.3 455.0,230.7 456.0,232.6"/>
<path d="M455.9,187.0 C455.3,185.4 453.1,180.4 452.1,177.6 C451.2,174.8 450.7,174.6 450.2,170.0 C449.7,165.4 449.6,156.0 449.3,150.0 C449.0,144.0 449.2,139.9 448.6,134.0 C448.1,128.1 447.0,120.3 446.0,114.5 C445.0,108.7 443.2,101.7 442.8,98.9 C442.4,96.1 443.1,97.8 443.4,97.6 C443.7,97.4 443.7,95.2 444.7,97.6 C445.7,100.0 448.1,105.8 449.3,111.9 C450.5,118.0 451.3,127.7 451.9,134.0 C452.4,140.3 452.2,144.0 452.6,150.0 C453.0,156.0 453.4,165.0 454.0,170.0 C454.6,175.0 455.7,178.3 456.0,180.0"/>
<path d="M412.1,371.0 C411.9,368.2 410.9,360.4 411.1,354.0 C411.3,347.6 412.3,339.7 413.2,332.6 C414.1,325.5 415.3,317.1 416.4,311.3 C417.5,305.6 418.4,303.1 420.0,298.1 C421.6,293.1 424.4,288.4 425.8,281.5 C427.2,274.6 428.2,263.5 428.3,256.6 C428.4,249.7 427.4,246.5 426.6,240.0 C425.8,233.5 424.4,225.0 423.7,217.4 C423.0,209.8 422.5,199.2 422.7,194.6 C422.9,189.9 424.1,190.6 425.0,189.5 C425.9,188.4 427.3,188.0 428.4,188.0 C429.5,188.0 430.7,188.7 431.5,189.5 C432.3,190.3 432.6,188.7 433.2,192.7 C433.8,196.7 434.0,206.9 435.1,213.6 C436.2,220.2 438.3,226.0 439.8,232.6 C441.3,239.2 443.1,246.5 444.0,253.3 C444.9,260.1 444.2,267.9 444.9,273.2 C445.6,278.4 446.3,281.5 448.2,284.8 C450.1,288.1 454.9,291.7 456.2,293.1"/>
<path d="M415.3,354.0 C415.5,350.4 415.7,339.7 416.4,332.6 C417.1,325.5 418.6,316.8 419.6,311.3 C420.6,305.8 421.1,304.8 422.5,299.8 C423.9,294.8 426.9,288.1 428.3,281.5 C429.7,274.9 430.7,266.8 430.8,259.9 C430.9,253.0 429.8,247.1 429.1,240.0 C428.4,232.9 427.1,224.7 426.5,217.4 C425.9,210.2 425.3,200.6 425.6,196.5 C425.9,192.4 427.4,193.5 428.2,193.0 C429.0,192.5 429.6,190.3 430.3,193.7 C431.0,197.1 431.2,207.1 432.2,213.6 C433.1,220.1 434.4,228.2 436.0,232.6 C437.6,237.0 439.9,236.6 441.6,240.0 C443.4,243.4 445.5,247.8 446.5,253.3 C447.5,258.8 446.7,268.2 447.4,273.2 C448.1,278.2 449.2,280.7 450.7,283.2 C452.2,285.7 455.3,287.3 456.2,288.1"/>
<path d="M427.1,359.3 C426.9,356.6 426.0,349.5 426.0,343.3 C426.0,337.1 426.4,329.1 427.1,322.0 C427.8,314.9 429.3,305.6 430.3,300.7 C431.3,295.8 431.9,294.6 433.0,292.5 C434.1,290.4 435.2,288.6 436.6,288.1 C438.0,287.7 439.7,287.6 441.6,289.8 C443.5,292.0 446.4,297.4 448.2,301.4 C450.0,305.3 451.2,310.8 452.6,313.5 C454.0,316.2 455.9,317.0 456.5,317.7"/>
<path d="M431.3,358.2 C431.1,355.7 430.5,349.0 430.3,343.3 C430.1,337.6 429.8,330.9 430.3,324.1 C430.8,317.4 432.5,307.7 433.5,302.8 C434.5,297.9 435.6,296.1 436.5,294.5 C437.4,292.9 437.4,291.4 439.1,293.1 C440.8,294.8 444.4,303.8 446.5,304.7 C448.6,305.6 449.9,298.1 451.6,298.5 C453.3,298.9 455.7,305.6 456.5,307.0"/>
<path d="M440.9,354.0 C440.2,352.6 437.8,349.0 436.7,345.4 C435.6,341.8 434.5,336.9 434.5,332.6 C434.5,328.4 435.6,322.5 436.7,319.9 C437.8,317.2 439.7,317.1 440.9,316.7 C442.1,316.3 442.9,315.0 444.1,317.7 C445.4,320.4 447.0,328.9 448.4,332.6 C449.8,336.3 450.1,338.3 452.6,340.1 C455.1,341.9 459.4,343.1 463.3,343.3 C467.2,343.5 472.9,340.9 476.1,341.2 C479.3,341.5 481.4,344.7 482.5,345.4"/>
<path d="M443.0,352.9 C442.5,352.0 440.8,351.0 439.9,347.6 C439.0,344.2 437.8,336.9 437.7,332.6 C437.6,328.3 438.7,323.8 439.4,322.0 C440.1,320.2 441.0,319.9 442.0,322.0 C443.0,324.1 443.8,331.4 445.2,334.8 C446.6,338.2 447.5,340.4 450.5,342.2 C453.5,344.0 458.3,345.0 463.3,345.4 C468.3,345.8 477.5,344.6 480.4,344.4"/>
<path d="M218.7,219.6 C219.8,217.8 222.6,212.3 225.0,209.0 C227.4,205.7 231.0,201.3 232.9,199.5 C234.8,197.7 236.1,197.9 236.5,198.3 C236.9,198.7 236.7,199.4 235.3,201.8 C233.9,204.2 230.4,209.1 228.0,213.0 C225.6,216.9 222.2,223.4 221.1,225.5"/>
<path d="M282.7,190.0 C284.2,191.5 288.9,195.8 292.0,199.0 C295.1,202.2 298.8,205.8 301.6,209.0 C304.4,212.2 306.6,214.8 309.0,218.0 C311.4,221.2 314.0,223.9 315.9,227.9 C317.8,231.9 319.8,237.6 320.6,242.1 C321.4,246.6 320.7,251.1 320.5,255.0 C320.3,258.9 319.7,262.0 319.4,265.8 C319.1,269.6 319.0,274.0 318.8,278.0 C318.6,282.0 318.5,286.5 318.2,290.0 C317.9,293.5 317.8,295.5 317.0,299.0 C316.2,302.5 314.1,308.8 313.5,310.8"/>
<path d="M255.7,221.3 C256.8,220.5 260.6,217.7 262.0,216.5 C263.4,215.3 263.4,214.8 264.2,214.2 C265.0,213.6 266.1,212.6 267.0,212.8 C267.9,213.0 269.6,214.4 269.9,215.6 C270.1,216.8 266.5,217.1 268.5,219.9 C270.5,222.7 277.5,228.2 282.0,232.5 C286.5,236.8 293.7,241.4 295.5,245.5 C297.3,249.6 293.9,251.2 292.7,256.9 C291.5,262.6 289.3,273.0 288.4,279.6 C287.4,286.2 287.2,292.0 287.0,296.7 C286.8,301.4 286.8,305.2 287.0,308.0 C287.2,310.8 288.2,312.8 288.4,313.7"/>
<path d="M288.4,244.1 C287.7,247.2 285.3,255.7 284.1,262.6 C282.9,269.5 281.8,278.7 281.3,285.3 C280.8,291.9 280.8,297.7 281.3,302.4 C281.8,307.1 282.7,310.9 284.1,313.7 C285.5,316.5 288.9,318.2 289.8,319.1"/>
<path d="M289.8,308.4 C293.8,308.8 309.6,310.4 313.5,310.8"/>
<path d="M289.8,315.5 C291.0,316.1 294.1,318.7 296.9,319.1 C299.7,319.5 303.6,319.3 306.4,317.9 C309.2,316.5 312.3,312.0 313.5,310.8"/>
<path d="M289.8,319.1 C291.4,320.3 295.0,324.0 299.3,326.2 C303.6,328.4 310.8,330.9 315.9,332.1 C321.0,333.3 327.4,333.7 330.1,333.3 C332.9,332.9 333.6,332.0 332.4,329.8 C331.2,327.6 326.1,323.5 323.0,320.3 C319.9,317.1 315.1,312.4 313.5,310.8"/>
<path d="M289.8,308.4 C289.8,309.6 289.8,314.3 289.8,315.5"/>
<path d="M212.0,338.0 C215.4,338.0 228.9,335.8 232.4,338.0 C235.9,340.2 233.0,346.6 232.9,351.1 C232.8,355.7 232.5,360.8 231.7,365.3 C230.9,369.8 229.8,376.1 228.2,378.3 C226.6,380.5 224.5,380.1 222.3,378.3 C220.1,376.5 216.9,372.2 215.1,367.7 C213.3,363.1 212.1,355.9 211.6,351.0 C211.1,346.1 211.9,340.2 212.0,338.0"/>
</svg>
<!-- cursor -->
<svg class="a" style="left:257px;top:208px" width="12" height="14"><path d="M2 2 L2.5 11.5 L5 9 L7.5 13 L9 12 L6.8 8.3 L10 8 Z" fill="#111" stroke="#fff" stroke-width="0.6"/></svg>
<!-- status bar -->
<div class="a" style="left:46px;top:413px;width:301px;height:9px;background:#3d3d3d"></div>
<div class="a" style="left:347px;top:413px;width:194px;height:9px;background:#2c2c2c"></div>
<div class="a" style="left:488px;top:413px;width:10px;height:9px;background:#9a9a9a"></div>
<div class="t" style="left:53px;top:413px;color:#777;font-size:8px;line-height:9px">GPU</div>
<svg class="a" style="left:72px;top:413px" width="10" height="9" fill="none" stroke="#bbb" stroke-width="1.2"><rect x="1" y="2" width="6" height="6"/><path d="M3 6 L8 1 M5 1 H8 V4"/></svg>
<div class="a" style="left:86px;top:413px;width:24px;height:9px;background:#bdbdbd"></div>
<div class="t" style="left:87px;top:413px;color:#333;font-size:8px;line-height:9px;font-family:'Liberation Serif',serif">128.94</div>
<div class="a" style="left:110px;top:413px;width:10px;height:9px;background:#333"></div>
<div class="a" style="left:112px;top:416px;width:0;height:0;border-left:3px solid transparent;border-right:3px solid transparent;border-top:4px solid #eee"></div>
<svg class="a" style="left:128px;top:414px" width="18" height="8" fill="#6a6a6a"><rect x="1" y="1" width="1" height="6"/><path d="M7 1 L3 4 L7 7Z M14 1 L10 4 L14 7Z"/></svg>
<div class="a" style="left:148px;top:413px;width:26px;height:9px;background:#a8a8a8"></div>
<div class="t" style="left:150px;top:413px;color:#333;font-size:8px;line-height:9px">1</div>
<div class="a" style="left:174px;top:413px;width:9px;height:9px;background:#333"></div>
<div class="a" style="left:175px;top:416px;width:0;height:0;border-left:3px solid transparent;border-right:3px solid transparent;border-top:4px solid #eee"></div>
<svg class="a" style="left:188px;top:414px" width="18" height="8" fill="#6a6a6a"><path d="M2 1 L6 4 L2 7Z M9 1 L13 4 L9 7Z"/><rect x="14" y="1" width="1" height="6"/></svg>
<div class="t" style="left:265px;top:413px;color:#bbb;font-size:8px;line-height:9px">选择</div>
<div class="a" style="left:339px;top:415px;width:0;height:0;border-top:3px solid transparent;border-bottom:3px solid transparent;border-left:4px solid #ddd"></div>
<div class="a" style="left:350px;top:415px;width:0;height:0;border-top:3px solid transparent;border-bottom:3px solid transparent;border-right:4px solid #ddd"></div>

<!-- IME bar -->
<div class="a" style="left:541px;top:405px;width:98px;height:17px;background:#fdfdfd"></div>
<div class="a" style="left:557px;top:405px;width:64px;height:1px;background:#e4e4e4"></div>
<svg class="a" style="left:540px;top:403px" width="18" height="19">
 <rect x="2" y="2" width="14" height="14" rx="4" fill="#4fb93c" transform="rotate(-8 9 9)"/>
 <path d="M12.5 5.5 C10 4 5.5 4.5 6 7.5 C6.5 9.5 12 8.5 12 11.5 C12 14 7 14 5 12.5" fill="none" stroke="#fff" stroke-width="2.2"/>
</svg>
<svg class="a" style="left:561px;top:406px" width="11" height="12" fill="none" stroke="#333" stroke-width="1.5"><path d="M1 2 H10 M5 2 L3.5 10 M2 6 H8.5 V10.5 M0.5 10.5 H10.5"/></svg>
<svg class="a" style="left:575px;top:406px" width="64" height="15">
 <path d="M8 2 A5.5 5.5 0 1 1 2.5 9 A4.5 4.5 0 0 0 8 2Z" fill="#333"/>
 <circle cx="18" cy="6" r="1.3" fill="#333"/><path d="M22 8 C23 9 22.5 11 21 12" stroke="#333" stroke-width="1.5" fill="none"/>
 <rect x="28" y="4" width="10" height="8" fill="none" stroke="#555" stroke-width="1.3"/><path d="M30 6.5 H36 M30 9 H36" stroke="#555" stroke-width="1"/>
 <circle cx="46" cy="6" r="2" fill="#b9c9c4"/><ellipse cx="46" cy="11" rx="3.5" ry="2.5" fill="#c7d5d0"/>
 <path d="M55 13 L59 8 M58 7 C59 4 62 5 63 4 L62 8 Z" stroke="#222" stroke-width="1.8" fill="#222"/>
</svg>

<!-- canvas v-scrollbar -->
<div class="a" style="left:638px;top:31px;width:11px;height:298px;background:#393939"></div>
<div class="a" style="left:638px;top:31px;width:2px;height:391px;background:#2e2e2e"></div>
<div class="a" style="left:639px;top:216px;width:9px;height:10px;background:#8d8d8d"></div>
<div class="a" style="left:640px;top:35px;width:0;height:0;border-left:3.5px solid transparent;border-right:3.5px solid transparent;border-bottom:4px solid #e6e6e6"></div>
<div class="a" style="left:638px;top:17px;width:11px;height:14px;background:#363636"></div>
<svg class="a" style="left:637px;top:21px" width="10" height="7" fill="none" stroke="#c8c8c8" stroke-width="1.1"><path d="M1.5 1 L4 3.5 L1.5 6 M5.5 1 L8 3.5 L5.5 6"/></svg>

<!-- right panel -->
<div class="a" style="left:640px;top:329px;width:160px;height:93px;background:#4a4a4a"></div>
<div class="a" style="left:649px;top:17px;width:151px;height:8px;background:#343434"></div>
<div class="t" style="left:791px;top:17px;font-size:7px;line-height:8px;color:#bbb">»</div>
<div class="a" style="left:649px;top:25px;width:151px;height:11px;background:#424242"></div>
<div class="a" style="left:738px;top:25px;width:28px;height:11px;background:#535353"></div>
<div class="t p" style="left:655px;top:26px;color:#b8b8b8">颜色</div>
<div class="t p" style="left:679px;top:26px;color:#b8b8b8">颜色参考</div>
<div class="t p" style="left:718px;top:26px;color:#b8b8b8">描边</div>
<div class="t p" style="left:741px;top:26px;color:#dcdcdc">&nbsp;&nbsp;渐变</div>
<svg class="a" style="left:740px;top:27px" width="7" height="8" fill="none" stroke="#dcdcdc" stroke-width="0.9"><path d="M3.5 1 L6 4 L3.5 7 L1 4Z"/></svg>
<svg class="a" style="left:786px;top:27px" width="12" height="8"><path d="M1 3 L4 3 L2.5 5Z" fill="#ddd"/><rect x="5.5" y="1.5" width="5" height="5" fill="#777"/><path d="M6 3 H10 M6 5 H10" stroke="#bbb" stroke-width="0.7"/></svg>
<div class="a" style="left:649px;top:36px;width:151px;height:147px;background:#535353"></div>
<!-- gradient panel content -->
<div class="a" style="left:655px;top:42px;width:17px;height:18px;background:linear-gradient(90deg,#f0f0f0,#111);border:1px solid #222"></div>
<div class="a" style="left:675px;top:51px;width:3px;height:1px;background:#ddd"></div>
<div class="t p" style="left:685px;top:46px;color:#d0d0d0">类型 :</div>
<div class="a" style="left:709px;top:42px;width:87px;height:10px;background:#606060;border:1px solid #4a4a4a"></div>
<div class="a" style="left:786px;top:45px;width:0;height:0;border-left:3px solid transparent;border-right:3px solid transparent;border-top:4px solid #eee"></div>
<div class="t p" style="left:685px;top:60px;color:#8e8e8e">描边 :</div>
<div class="a" style="left:708px;top:57px;width:14px;height:13px;background:#5c5c5c;border:1px solid #4d4d4d"></div>
<div class="a" style="left:723px;top:57px;width:14px;height:13px;background:#5c5c5c;border:1px solid #4d4d4d"></div>
<div class="a" style="left:738px;top:57px;width:13px;height:13px;background:#5c5c5c;border:1px solid #4d4d4d"></div>
<svg class="a" style="left:708px;top:57px" width="44" height="13" fill="none" stroke="#7a7a7a" stroke-width="1"><path d="M3 11 V3 H11 M5 11 V5 H11 M18 11 V3 H26 M20 11 V5 H26 M33 11 V3 H41 M35 11 V5 H41"/></svg>
<div class="a" style="left:655px;top:64px;width:12px;height:12px;background:#fafafa;border:1px solid #333"></div>
<div class="a" style="left:661px;top:71px;width:12px;height:12px;background:#fafafa;border:1px solid #333"></div>
<div class="a" style="left:665px;top:75px;width:4px;height:4px;background:#6b2b34"></div>
<svg class="a" style="left:661px;top:71px" width="12" height="12"><path d="M0 12 L12 0" stroke="#a01e30" stroke-width="1.3"/></svg>
<svg class="a" style="left:659px;top:89px" width="11" height="11" fill="#8a8a8a"><rect x="1" y="1" width="3" height="3"/><rect x="6" y="1" width="4" height="2"/><rect x="1" y="6" width="4" height="3"/><rect x="6" y="6" width="4" height="4"/></svg>
<svg class="a" style="left:696px;top:76px" width="9" height="8" fill="none" stroke="#9a9a9a" stroke-width="1"><path d="M1 7 H8 L4.5 1 Z"/></svg>
<div class="a" style="left:708px;top:74px;width:42px;height:12px;background:#6d6d6d;border:1px solid #4c4c4c"></div>
<div class="a" style="left:741px;top:75px;width:8px;height:10px;background:#737373;border-left:1px solid #555"></div>
<div class="a" style="left:743px;top:79px;width:0;height:0;border-left:2px solid transparent;border-right:2px solid transparent;border-top:3px solid #aaa"></div>
<svg class="a" style="left:695px;top:90px" width="11" height="12" fill="none" stroke="#9a9a9a" stroke-width="1"><ellipse cx="6" cy="7" rx="3.5" ry="2.5"/><path d="M1 1 V11 H10"/></svg>
<div class="a" style="left:708px;top:90px;width:42px;height:12px;background:#6d6d6d;border:1px solid #4c4c4c"></div>
<div class="a" style="left:741px;top:91px;width:8px;height:10px;background:#737373;border-left:1px solid #555"></div>
<div class="a" style="left:743px;top:95px;width:0;height:0;border-left:2px solid transparent;border-right:2px solid transparent;border-top:3px solid #aaa"></div>
<div class="a" style="left:656px;top:111px;width:123px;height:24px;background:linear-gradient(90deg,#fdfdfd 0%,#d0d0d0 25%,#a0a0a0 50%,#505050 78%,#050505 100%);border:1px solid #222"></div>
<svg class="a" style="left:786px;top:114px" width="9" height="10" fill="none" stroke="#888" stroke-width="1"><path d="M1 2 H8 M3 2 V1 H6 V2 M2 3 V9 H7 V3"/></svg>
<div class="t p" style="left:668px;top:153px;color:#8e8e8e">不透明度 :</div>
<div class="a" style="left:708px;top:152px;width:42px;height:12px;background:#6d6d6d;border:1px solid #4c4c4c"></div>
<div class="a" style="left:741px;top:153px;width:8px;height:10px;background:#737373;border-left:1px solid #555"></div>
<div class="a" style="left:743px;top:157px;width:0;height:0;border-left:2px solid transparent;border-right:2px solid transparent;border-top:3px solid #aaa"></div>
<div class="t p" style="left:685px;top:169px;color:#8e8e8e">位置 :</div>
<div class="a" style="left:708px;top:168px;width:42px;height:12px;background:#6d6d6d;border:1px solid #4c4c4c"></div>
<div class="a" style="left:741px;top:169px;width:8px;height:10px;background:#737373;border-left:1px solid #555"></div>
<div class="a" style="left:743px;top:173px;width:0;height:0;border-left:2px solid transparent;border-right:2px solid transparent;border-top:3px solid #aaa"></div>

<!-- layers panel -->
<div class="a" style="left:649px;top:183px;width:151px;height:14px;background:#424242"></div>
<div class="a" style="left:691px;top:184px;width:20px;height:13px;background:#535353"></div>
<div class="t p" style="left:655px;top:186px;color:#b8b8b8">色板</div>
<div class="t p" style="left:674px;top:186px;color:#999">画笔</div>
<div class="t p" style="left:692px;top:186px;color:#dcdcdc">图层</div>
<div class="t p" style="left:718px;top:186px;color:#b8b8b8;font-size:7px;letter-spacing:-0.3px">路径查找</div>
<div class="t p" style="left:748px;top:186px;color:#b8b8b8">对齐</div>
<svg class="a" style="left:786px;top:187px" width="12" height="8"><path d="M1 3 L4 3 L2.5 5Z" fill="#ddd"/><rect x="5.5" y="1.5" width="5" height="5" fill="#777"/><path d="M6 3 H10 M6 5 H10" stroke="#bbb" stroke-width="0.7"/></svg>
<div class="a" style="left:649px;top:197px;width:151px;height:132px;background:#4c4c4c"></div>
<div class="a" style="left:654px;top:200px;width:135px;height:13px;background:#575757;border-top:1px solid #404040"></div>
<div class="a" style="left:666px;top:200px;width:1px;height:13px;background:#444"></div>
<div class="a" style="left:679px;top:200px;width:1px;height:13px;background:#474747"></div>
<div class="a" style="left:766px;top:200px;width:1px;height:13px;background:#444"></div>
<svg class="a" style="left:655px;top:203px" width="10" height="8"><path d="M0.8 4 C3 0.8 7 0.8 9.2 4 C7 7.2 3 7.2 0.8 4Z" fill="#d0d0d0" stroke="#dadada" stroke-width="0.8"/><circle cx="5" cy="4" r="1.8" fill="#2e2e2e"/></svg>
<svg class="a" style="left:768px;top:202px" width="10" height="10"><circle cx="5" cy="5.5" r="3.3" fill="none" stroke="#c5c5c5" stroke-width="1"/><circle cx="5" cy="5.5" r="1" fill="#c5c5c5"/></svg>
<div class="a" style="left:735px;top:202px;width:11px;height:10px;background:#fafafa;border:1px solid #3a3a3a"></div>
<svg class="a" style="left:736px;top:203px" width="9" height="8"><path d="M1 1 L2 6 C3 7 6 7 8 7" fill="none" stroke="#6b2b34" stroke-width="1"/></svg>
<div class="a" style="left:654px;top:213px;width:135px;height:13px;background:#575757;border-top:1px solid #404040"></div>
<div class="a" style="left:666px;top:213px;width:1px;height:13px;background:#444"></div>
<div class="a" style="left:679px;top:213px;width:1px;height:13px;background:#474747"></div>
<div class="a" style="left:766px;top:213px;width:1px;height:13px;background:#444"></div>
<svg class="a" style="left:655px;top:216px" width="10" height="8"><path d="M0.8 4 C3 0.8 7 0.8 9.2 4 C7 7.2 3 7.2 0.8 4Z" fill="#d0d0d0" stroke="#dadada" stroke-width="0.8"/><circle cx="5" cy="4" r="1.8" fill="#2e2e2e"/></svg>
<svg class="a" style="left:768px;top:215px" width="10" height="10"><circle cx="5" cy="5.5" r="3.3" fill="none" stroke="#c5c5c5" stroke-width="1"/><circle cx="5" cy="5.5" r="1" fill="#c5c5c5"/></svg>
<div class="a" style="left:735px;top:215px;width:11px;height:10px;background:#fafafa;border:1px solid #3a3a3a"></div>
<svg class="a" style="left:736px;top:216px" width="9" height="8"><path d="M4 0 V8 M6 1 V8" fill="none" stroke="#aaa" stroke-width="0.7"/></svg>
<div class="a" style="left:654px;top:226px;width:135px;height:13px;background:#575757;border-top:1px solid #404040"></div>
<div class="a" style="left:666px;top:226px;width:1px;height:13px;background:#444"></div>
<div class="a" style="left:679px;top:226px;width:1px;height:13px;background:#474747"></div>
<div class="a" style="left:766px;top:226px;width:1px;height:13px;background:#444"></div>
<svg class="a" style="left:655px;top:229px" width="10" height="8"><path d="M0.8 4 C3 0.8 7 0.8 9.2 4 C7 7.2 3 7.2 0.8 4Z" fill="#d0d0d0" stroke="#dadada" stroke-width="0.8"/><circle cx="5" cy="4" r="1.8" fill="#2e2e2e"/></svg>
<svg class="a" style="left:768px;top:228px" width="10" height="10"><circle cx="5" cy="5.5" r="3.3" fill="none" stroke="#c5c5c5" stroke-width="1"/><circle cx="5" cy="5.5" r="1" fill="#c5c5c5"/></svg>
<div class="a" style="left:735px;top:228px;width:11px;height:10px;background:#fafafa;border:1px solid #3a3a3a"></div>
<svg class="a" style="left:736px;top:229px" width="9" height="8"><path d="M4 0 V8 M6 1 V8" fill="none" stroke="#aaa" stroke-width="0.7"/></svg>
<div class="a" style="left:654px;top:239px;width:135px;height:13px;background:#575757;border-top:1px solid #404040"></div>
<div class="a" style="left:666px;top:239px;width:1px;height:13px;background:#444"></div>
<div class="a" style="left:679px;top:239px;width:1px;height:13px;background:#474747"></div>
<div class="a" style="left:766px;top:239px;width:1px;height:13px;background:#444"></div>
<svg class="a" style="left:655px;top:242px" width="10" height="8"><path d="M0.8 4 C3 0.8 7 0.8 9.2 4 C7 7.2 3 7.2 0.8 4Z" fill="#d0d0d0" stroke="#dadada" stroke-width="0.8"/><circle cx="5" cy="4" r="1.8" fill="#2e2e2e"/></svg>
<svg class="a" style="left:768px;top:241px" width="10" height="10"><circle cx="5" cy="5.5" r="3.3" fill="none" stroke="#c5c5c5" stroke-width="1"/><circle cx="5" cy="5.5" r="1" fill="#c5c5c5"/></svg>
<div class="a" style="left:735px;top:241px;width:11px;height:10px;background:#fafafa;border:1px solid #3a3a3a"></div>
<svg class="a" style="left:736px;top:242px" width="9" height="8"><path d="M4 0 V8 M6 1 V8" fill="none" stroke="#aaa" stroke-width="0.7"/></svg>
<div class="a" style="left:654px;top:252px;width:135px;height:13px;background:#575757;border-top:1px solid #404040"></div>
<div class="a" style="left:666px;top:252px;width:1px;height:13px;background:#444"></div>
<div class="a" style="left:679px;top:252px;width:1px;height:13px;background:#474747"></div>
<div class="a" style="left:766px;top:252px;width:1px;height:13px;background:#444"></div>
<svg class="a" style="left:655px;top:255px" width="10" height="8"><path d="M0.8 4 C3 0.8 7 0.8 9.2 4 C7 7.2 3 7.2 0.8 4Z" fill="#d0d0d0" stroke="#dadada" stroke-width="0.8"/><circle cx="5" cy="4" r="1.8" fill="#2e2e2e"/></svg>
<svg class="a" style="left:768px;top:254px" width="10" height="10"><circle cx="5" cy="5.5" r="3.3" fill="none" stroke="#c5c5c5" stroke-width="1"/><circle cx="5" cy="5.5" r="1" fill="#c5c5c5"/></svg>
<div class="a" style="left:735px;top:254px;width:11px;height:10px;background:#fafafa;border:1px solid #3a3a3a"></div>
<svg class="a" style="left:736px;top:255px" width="9" height="8"><path d="M4 0 V8 M6 1 V8" fill="none" stroke="#aaa" stroke-width="0.7"/></svg>
<div class="a" style="left:654px;top:265px;width:135px;height:13px;background:#575757;border-top:1px solid #404040"></div>
<div class="a" style="left:666px;top:265px;width:1px;height:13px;background:#444"></div>
<div class="a" style="left:679px;top:265px;width:1px;height:13px;background:#474747"></div>
<div class="a" style="left:766px;top:265px;width:1px;height:13px;background:#444"></div>
<svg class="a" style="left:655px;top:268px" width="10" height="8"><path d="M0.8 4 C3 0.8 7 0.8 9.2 4 C7 7.2 3 7.2 0.8 4Z" fill="#d0d0d0" stroke="#dadada" stroke-width="0.8"/><circle cx="5" cy="4" r="1.8" fill="#2e2e2e"/></svg>
<svg class="a" style="left:768px;top:267px" width="10" height="10"><circle cx="5" cy="5.5" r="3.3" fill="none" stroke="#c5c5c5" stroke-width="1"/><circle cx="5" cy="5.5" r="1" fill="#c5c5c5"/></svg>
<div class="a" style="left:735px;top:267px;width:11px;height:10px;background:#fafafa;border:1px solid #3a3a3a"></div>
<svg class="a" style="left:736px;top:268px" width="9" height="8"><path d="M4 0 V8 M6 1 V8" fill="none" stroke="#aaa" stroke-width="0.7"/></svg>
<div class="a" style="left:654px;top:278px;width:135px;height:13px;background:#575757;border-top:1px solid #404040"></div>
<div class="a" style="left:666px;top:278px;width:1px;height:13px;background:#444"></div>
<div class="a" style="left:679px;top:278px;width:1px;height:13px;background:#474747"></div>
<div class="a" style="left:766px;top:278px;width:1px;height:13px;background:#444"></div>
<svg class="a" style="left:655px;top:281px" width="10" height="8"><path d="M0.8 4 C3 0.8 7 0.8 9.2 4 C7 7.2 3 7.2 0.8 4Z" fill="#d0d0d0" stroke="#dadada" stroke-width="0.8"/><circle cx="5" cy="4" r="1.8" fill="#2e2e2e"/></svg>
<svg class="a" style="left:768px;top:280px" width="10" height="10"><circle cx="5" cy="5.5" r="3.3" fill="none" stroke="#c5c5c5" stroke-width="1"/><circle cx="5" cy="5.5" r="1" fill="#c5c5c5"/></svg>
<div class="a" style="left:735px;top:280px;width:11px;height:10px;background:#fafafa;border:1px solid #3a3a3a"></div>
<svg class="a" style="left:736px;top:281px" width="9" height="8"><path d="M1 6 C2 1 7 1 8 6 Z" fill="#6b2b34"/></svg>
<div class="a" style="left:654px;top:291px;width:135px;height:13px;background:#575757;border-top:1px solid #404040"></div>
<div class="a" style="left:666px;top:291px;width:1px;height:13px;background:#444"></div>
<div class="a" style="left:679px;top:291px;width:1px;height:13px;background:#474747"></div>
<div class="a" style="left:766px;top:291px;width:1px;height:13px;background:#444"></div>
<svg class="a" style="left:655px;top:294px" width="10" height="8"><path d="M0.8 4 C3 0.8 7 0.8 9.2 4 C7 7.2 3 7.2 0.8 4Z" fill="#d0d0d0" stroke="#dadada" stroke-width="0.8"/><circle cx="5" cy="4" r="1.8" fill="#2e2e2e"/></svg>
<svg class="a" style="left:768px;top:293px" width="10" height="10"><circle cx="5" cy="5.5" r="3.3" fill="none" stroke="#c5c5c5" stroke-width="1"/><circle cx="5" cy="5.5" r="1" fill="#c5c5c5"/></svg>
<div class="a" style="left:735px;top:293px;width:11px;height:10px;background:#fafafa;border:1px solid #3a3a3a"></div>
<svg class="a" style="left:736px;top:294px" width="9" height="8"><path d="M4 0 V8 M6 1 V8" fill="none" stroke="#aaa" stroke-width="0.7"/></svg>
<div class="a" style="left:654px;top:304px;width:135px;height:13px;background:#575757;border-top:1px solid #404040"></div>
<div class="a" style="left:666px;top:304px;width:1px;height:13px;background:#444"></div>
<div class="a" style="left:679px;top:304px;width:1px;height:13px;background:#474747"></div>
<div class="a" style="left:766px;top:304px;width:1px;height:13px;background:#444"></div>
<svg class="a" style="left:655px;top:307px" width="10" height="8"><path d="M0.8 4 C3 0.8 7 0.8 9.2 4 C7 7.2 3 7.2 0.8 4Z" fill="#d0d0d0" stroke="#dadada" stroke-width="0.8"/><circle cx="5" cy="4" r="1.8" fill="#2e2e2e"/></svg>
<svg class="a" style="left:768px;top:306px" width="10" height="10"><circle cx="5" cy="5.5" r="3.3" fill="none" stroke="#c5c5c5" stroke-width="1"/><circle cx="5" cy="5.5" r="1" fill="#c5c5c5"/></svg>
<div class="a" style="left:735px;top:306px;width:11px;height:10px;background:#fafafa;border:1px solid #3a3a3a"></div>
<svg class="a" style="left:736px;top:307px" width="9" height="8"><path d="M1 5 C3 3 6 3 8 5" fill="none" stroke="#6b2b34" stroke-width="1.2"/></svg>
<div class="a" style="left:654px;top:317px;width:135px;height:12px;background:#575757;border-top:1px solid #404040"></div>
<div class="a" style="left:666px;top:317px;width:1px;height:12px;background:#444"></div>
<div class="a" style="left:679px;top:317px;width:1px;height:12px;background:#474747"></div>
<div class="a" style="left:766px;top:317px;width:1px;height:12px;background:#444"></div>
<svg class="a" style="left:655px;top:320px" width="10" height="8"><path d="M0.8 4 C3 0.8 7 0.8 9.2 4 C7 7.2 3 7.2 0.8 4Z" fill="#d0d0d0" stroke="#dadada" stroke-width="0.8"/><circle cx="5" cy="4" r="1.8" fill="#2e2e2e"/></svg>
<svg class="a" style="left:768px;top:319px" width="10" height="10"><circle cx="5" cy="5.5" r="3.3" fill="none" stroke="#c5c5c5" stroke-width="1"/><circle cx="5" cy="5.5" r="1" fill="#c5c5c5"/></svg>
<div class="a" style="left:735px;top:319px;width:11px;height:10px;background:#fafafa;border:1px solid #3a3a3a"></div>
<svg class="a" style="left:736px;top:320px" width="9" height="8"><path d="M4 0 V8 M6 1 V8" fill="none" stroke="#aaa" stroke-width="0.7"/></svg>
<div class="a" style="left:680px;top:200px;width:4px;height:129px;background:#46629a"></div>
<div class="a" style="left:681px;top:200px;width:2px;height:129px;background:#7d9bd6"></div>
<div class="a" style="left:789px;top:201px;width:9px;height:128px;background:#3a3a3a"></div>
<div class="a" style="left:790px;top:285px;width:7px;height:21px;background:#8d8d8d"></div>
<div class="a" style="left:791px;top:204px;width:0;height:0;border-left:3px solid transparent;border-right:3px solid transparent;border-bottom:4px solid #eee"></div>
<div class="a" style="left:791px;top:325px;width:0;height:0;border-left:3px solid transparent;border-right:3px solid transparent;border-top:4px solid #eee"></div>
<div class="a" style="left:747px;top:329px;width:1px;height:93px;background:#444"></div>
<div class="a" style="left:770px;top:329px;width:2px;height:70px;background:#5c5c5c"></div>
<div class="a" style="left:776px;top:329px;width:3px;height:45px;background:#595959"></div>
<div class="a" style="left:765px;top:372px;width:2px;height:45px;background:#545454"></div>
<div class="a" style="left:779px;top:375px;width:2px;height:35px;background:#535353"></div>

</body></html>
